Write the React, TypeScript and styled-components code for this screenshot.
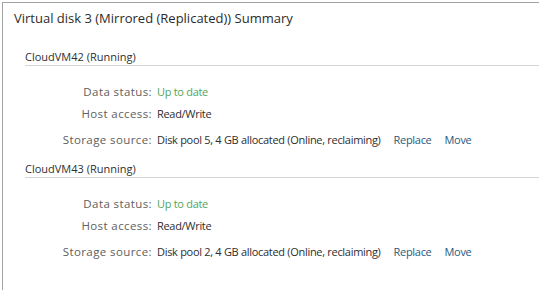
import styled, { createGlobalStyle } from "styled-components";

const GlobalStyle = createGlobalStyle`
  html, body { margin: 0; padding: 0; background: #fff; }
  body { font-family: "Open Sans", "Noto Sans", sans-serif; }
`;

const Frame = styled.div`
  margin: 2px 0 0 2px;
  width: 537px;
  height: 288px;
  box-sizing: border-box;
  border-top: 1px solid #a3a3a3;
  border-left: 1px solid #a3a3a3;
  padding: 5px 0 0 11px;
`;

const Title = styled.h1`
  margin: 0 0 21px 0;
  font-size: 13px;
  font-weight: normal;
  color: #2b2b2b;
  line-height: 20px;
`;

const Section = styled.section`
  margin: 0 0 13px 11px;
`;

const SectionHead = styled.div`
  font-size: 11px;
  color: #303030;
  line-height: 16px;
  border-bottom: 1px solid #d4d4d4;
  margin-bottom: 18px;
`;

const Row = styled.div<{ $top?: number }>`
  display: flex;
  align-items: center;
  font-size: 11px;
  line-height: 16px;
  margin-top: ${(p) => p.$top ?? 6}px;
  &:first-of-type { margin-top: 0; }
`;

const Label = styled.div`
  width: 127px;
  flex: none;
  text-align: right;
  color: #606060;
  font-size: 11.5px;
  letter-spacing: 0.4px;
  margin-right: 5px;
`;

const Value = styled.div<{ $ok?: boolean }>`
  color: ${(p) => (p.$ok ? "#52a55a" : "#2e2e2e")};
  display: flex;
  gap: 13px;
  letter-spacing: -0.3px;
`;

const Link = styled.a`
  color: #1e5a82;
  text-decoration: none;
  cursor: pointer;
`;

const Links = styled.span`
  display: inline-flex;
  gap: 13px;
`;

const vms = [
  { name: "CloudVM42 (Running)", pool: "Disk pool 5" },
  { name: "CloudVM43 (Running)", pool: "Disk pool 2" },
];

export default function App() {
  return (
    <>
      <GlobalStyle />
      <Frame>
        <Title>Virtual disk 3 (Mirrored (Replicated)) Summary</Title>
        {vms.map((vm) => (
          <Section key={vm.name}>
            <SectionHead>{vm.name}</SectionHead>
            <Row>
              <Label>Data status:</Label>
              <Value $ok>Up to date</Value>
            </Row>
            <Row>
              <Label>Host access:</Label>
              <Value>Read/Write</Value>
            </Row>
            <Row $top={10}>
              <Label>Storage source:</Label>
              <Value>
                <span>{vm.pool}, 4 GB allocated (Online, reclaiming)</span>
                <Links>
                  <Link>Replace</Link>
                  <Link>Move</Link>
                </Links>
              </Value>
            </Row>
          </Section>
        ))}
      </Frame>
    </>
  );
}
